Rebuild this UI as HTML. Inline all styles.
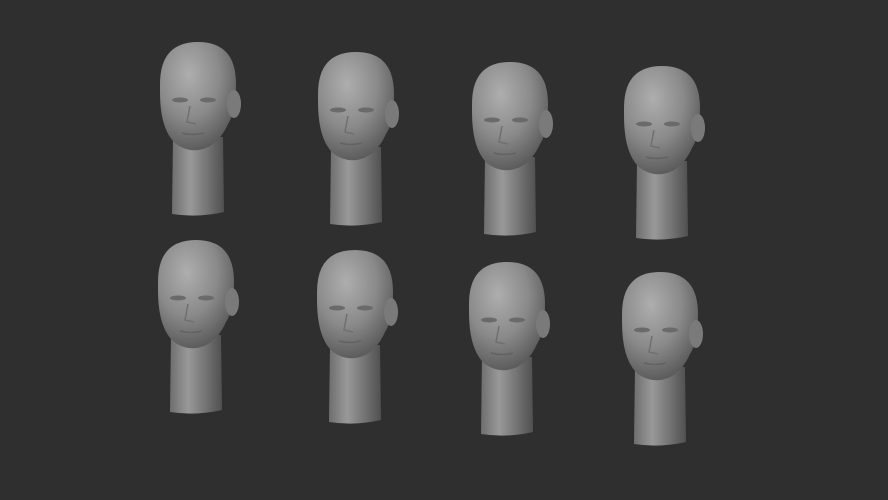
<!DOCTYPE html>
<html><head><meta charset="utf-8"><style>
html,body{margin:0;padding:0;background:#2f2f2f;width:888px;height:500px;overflow:hidden}
svg{display:block}
</style></head><body>
<svg width="888" height="500" viewBox="0 0 888 500">
<defs>
<radialGradient id="sk" cx="0.38" cy="0.3" r="0.8">
<stop offset="0" stop-color="#aeaeae"/><stop offset="0.5" stop-color="#8a8a8a"/><stop offset="1" stop-color="#4e4e4e"/>
</radialGradient>
<linearGradient id="nk" x1="0" x2="1" y1="0" y2="0">
<stop offset="0" stop-color="#6e6e6e"/><stop offset="0.35" stop-color="#999"/><stop offset="1" stop-color="#505050"/>
</linearGradient>
<g id="head">
<path d="M-25 95 L-26 172 Q0 176 26 170 L25 95 Z" fill="url(#nk)"/>
<path d="M-38 42 Q-38 0 0 0 Q38 0 38 42 Q38 70 30 82 Q22 100 8 106 Q-8 112 -22 102 Q-38 88 -38 50 Z" fill="url(#sk)"/>
<ellipse cx="36" cy="62" rx="7" ry="14" fill="#7a7a7a"/>
<ellipse cx="-18" cy="58" rx="8" ry="2.5" fill="#6a6a6a"/>
<ellipse cx="10" cy="58" rx="8" ry="2.5" fill="#6a6a6a"/>
<path d="M-8 64 L-11 80 L-2 82" fill="none" stroke="#707070" stroke-width="1.5"/>
<path d="M-16 91 Q-6 94 6 91" fill="none" stroke="#626262" stroke-width="1.5"/>
</g>
</defs>
<use href="#head" x="198" y="42"/>
<use href="#head" x="356" y="52"/>
<use href="#head" x="510" y="62"/>
<use href="#head" x="662" y="66"/>
<use href="#head" x="196" y="240"/>
<use href="#head" x="355" y="250"/>
<use href="#head" x="507" y="262"/>
<use href="#head" x="660" y="272"/>
</svg>
</body></html>
